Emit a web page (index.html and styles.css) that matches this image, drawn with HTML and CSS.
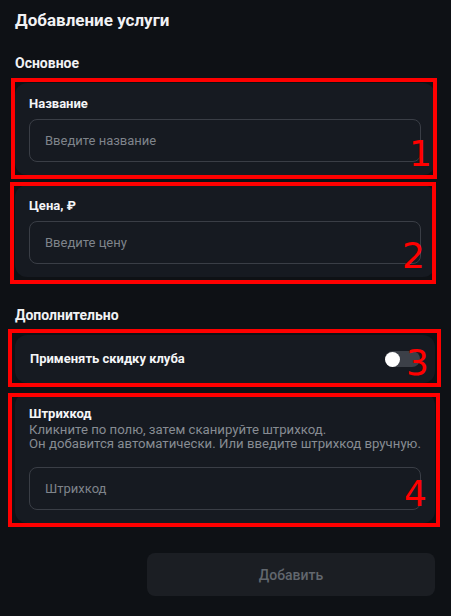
FILE: index.html
```html
<!DOCTYPE html>
<html lang="ru">
<head>
<meta charset="utf-8">
<title>Добавление услуги</title>
<link rel="stylesheet" href="styles.css">
</head>
<body>
<main class="page">
  <h1 class="title">Добавление услуги</h1>

  <h2 class="section">Основное</h2>
  <div class="cards">
    <div class="card">
      <label class="label">Название</label>
      <div class="input"><span class="placeholder">Введите название</span></div>
    </div>
    <div class="card">
      <label class="label">Цена, ₽</label>
      <div class="input"><span class="placeholder">Введите цену</span></div>
    </div>
  </div>

  <h2 class="section section-extra">Дополнительно</h2>
  <div class="cards">
    <div class="card card-row">
      <span class="label">Применять скидку клуба</span>
      <span class="toggle"><span class="knob"></span></span>
    </div>
    <div class="card">
      <label class="label">Штрихкод</label>
      <p class="hint">Кликните по полю, затем сканируйте штрихкод.<br>Он добавится автоматически. Или введите штрихкод вручную.</p>
      <div class="input input-barcode"><span class="placeholder">Штрихкод</span></div>
    </div>
  </div>

  <div class="actions">
    <button class="btn" type="button">Добавить</button>
  </div>
</main>

<div class="mark mark-1"></div>
<div class="mark mark-2"></div>
<div class="mark mark-3"></div>
<div class="mark mark-4"></div>
<span class="num num-1">1</span>
<span class="num num-2">2</span>
<span class="num num-3">3</span>
<span class="num num-4">4</span>
</body>
</html>
```

FILE: styles.css
```css
* { box-sizing: border-box; }
html, body {
  margin: 0;
  padding: 0;
  background: #0e1115;
  width: 451px;
  height: 616px;
  overflow: hidden;
}
body {
  font-family: Roboto, "Noto Sans", sans-serif;
  color: #f1f2f4;
}
.page {
  padding: 9px 16px 0 15px;
  display: flex;
  flex-direction: column;
}
.title {
  margin: 0;
  font-size: 17px;
  line-height: 22px;
  font-weight: 700;
}
.section {
  margin: 23px 0 11px;
  font-size: 14px;
  line-height: 18px;
  font-weight: 700;
}
.section-extra {
  margin-top: 29px;
  margin-bottom: 11px;
}
.cards {
  display: flex;
  flex-direction: column;
  gap: 10px;
}
.card {
  background: #161a21;
  border-radius: 12px;
  padding: 13px 14px 13px;
  display: flex;
  flex-direction: column;
}
.label {
  font-size: 13px;
  line-height: 16px;
  font-weight: 700;
  color: #f4f5f7;
}
.input {
  margin-top: 7px;
  height: 43px;
  border: 1px solid #3a3e46;
  border-radius: 8px;
  display: flex;
  align-items: center;
  padding: 0 15px;
}
.placeholder {
  font-size: 13px;
  color: #7f848b;
}
.card-row {
  flex-direction: row;
  align-items: center;
  justify-content: space-between;
  height: 48px;
  padding: 0 15px;
}
.toggle {
  width: 35px;
  height: 16px;
  border-radius: 8px;
  background: #3c4048;
  display: flex;
  align-items: center;
}
.knob {
  width: 15px;
  height: 15px;
  border-radius: 50%;
  background: #ffffff;
}
.hint {
  margin: 1px 0 0;
  font-size: 13.2px;
  line-height: 14px;
  color: #878c93;
}
.input-barcode {
  margin-top: 16px;
}
.actions {
  display: flex;
  justify-content: flex-end;
  margin-top: 30px;
}
.btn {
  width: 288px;
  height: 43px;
  border: 0;
  border-radius: 8px;
  background: #1b1e23;
  color: #62676e;
  font-family: Roboto, "Noto Sans", sans-serif;
  font-size: 14px;
  font-weight: 500;
}

/* annotation overlays */
.mark {
  position: absolute;
  border: 4px solid #ff0000;
  pointer-events: none;
}
.mark-1 { left: 11px; top: 78px; width: 426px; height: 101px; }
.mark-2 { left: 10px; top: 182px; width: 426px; height: 102px; }
.mark-3 { left: 8px; top: 329px; width: 433px; height: 58px; }
.mark-4 { left: 8px; top: 393px; width: 432px; height: 134px; }
.num {
  position: absolute;
  font-family: "DejaVu Sans", sans-serif;
  font-size: 36px;
  line-height: 36px;
  color: #ff0000;
}
.num-1 { left: 409px; top: 136px; }
.num-2 { left: 402px; top: 238px; }
.num-3 { left: 406px; top: 345px; }
.num-4 { left: 404px; top: 476px; }
```
